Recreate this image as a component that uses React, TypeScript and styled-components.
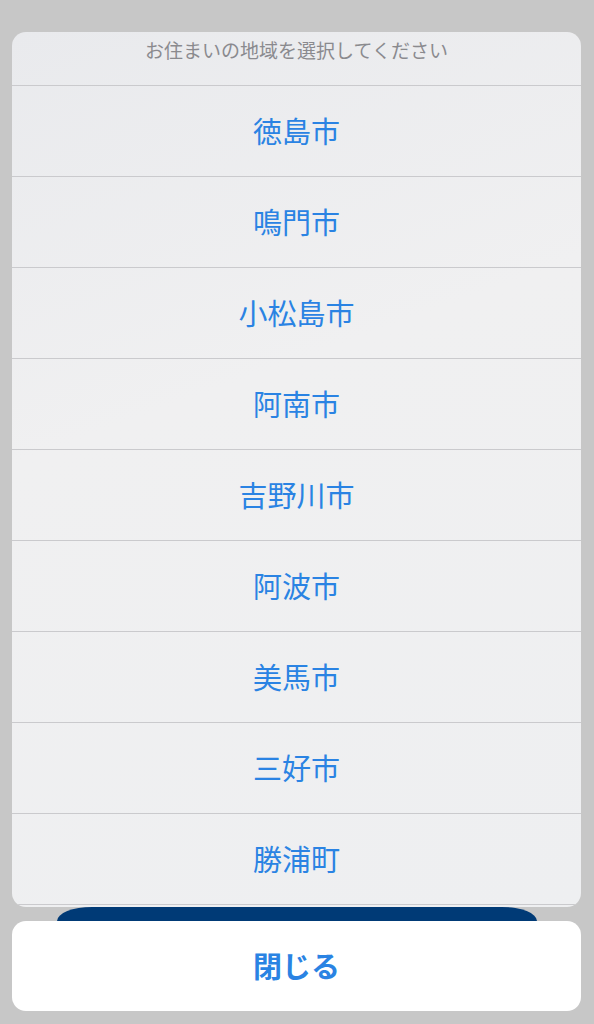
import styled, { createGlobalStyle } from 'styled-components';

const cities = [
  '徳島市',
  '鳴門市',
  '小松島市',
  '阿南市',
  '吉野川市',
  '阿波市',
  '美馬市',
  '三好市',
  '勝浦町',
];

const GlobalStyle = createGlobalStyle`
  html, body {
    margin: 0;
    padding: 0;
    background: #c7c7c7;
  }
  body {
    font-family: "Noto Sans CJK JP", "Noto Sans", sans-serif;
  }
`;

export default function App() {
  return (
    <>
      <GlobalStyle />
      <Screen>
        <Sheet>
          <Title>お住まいの地域を選択してください</Title>
          <List>
            {cities.map(city => (
              <Option key={city}>{city}</Option>
            ))}
          </List>
        </Sheet>
        <Peek />
        <CloseButton role="button">閉じる</CloseButton>
      </Screen>
    </>
  );
}

const Screen = styled.div`
  display: flex;
  flex-direction: column;
  height: 1024px;
  padding: 32px 13px 0 12px;
  box-sizing: border-box;
`;

const Sheet = styled.div`
  display: flex;
  flex-direction: column;
  height: 875px;
  border-radius: 14px;
  overflow: hidden;
  background: linear-gradient(160deg, #e9eaed 0%, #f0f0f1 40%, #eeeff1 100%);
`;

const Title = styled.div`
  flex: none;
  height: 54px;
  display: flex;
  justify-content: center;
  align-items: flex-start;
  padding-top: 4px;
  box-sizing: border-box;
  border-bottom: 1px solid #cacacd;
  font-size: 19px;
  line-height: 27px;
  color: #8a8a8e;
`;

const List = styled.div`
  flex: 1;
  overflow: hidden;
`;

const Option = styled.div`
  height: 91px;
  display: flex;
  align-items: center;
  justify-content: center;
  padding-bottom: 3px;
  box-sizing: border-box;
  border-bottom: 1px solid #cacacd;
  font-size: 29px;
  color: #2a83e3;
`;

const Peek = styled.div`
  flex: none;
  height: 14px;
  margin: 0 44px 0 45px;
  background: #003a76;
  border-radius: 60px 60px 0 0 / 24px 24px 0 0;
`;

const CloseButton = styled.div`
  flex: none;
  height: 90px;
  display: flex;
  align-items: center;
  justify-content: center;
  padding-bottom: 2px;
  box-sizing: border-box;
  border-radius: 14px;
  background: #ffffff;
  font-size: 29px;
  font-weight: 700;
  color: #2a83e3;
  cursor: pointer;
`;
